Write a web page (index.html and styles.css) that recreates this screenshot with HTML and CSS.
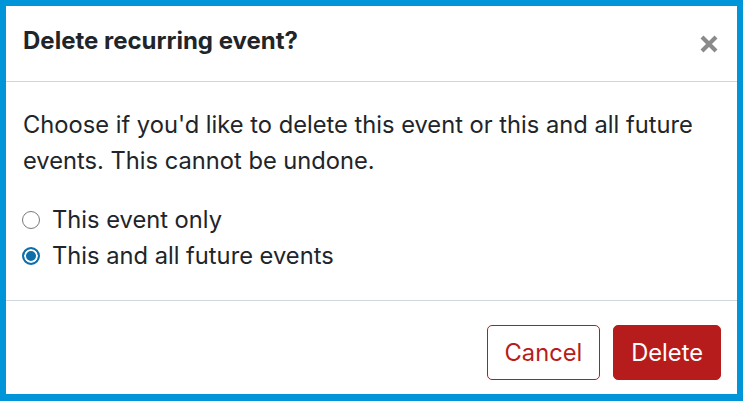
FILE: index.html
```html
<!DOCTYPE html>
<html lang="en">
<head>
<meta charset="utf-8">
<title>Delete recurring event</title>
<link rel="stylesheet" href="styles.css">
</head>
<body>
<div class="modal" role="dialog" aria-labelledby="modal-title">
  <header class="modal-header">
    <h1 class="modal-title" id="modal-title">Delete recurring event?</h1>
    <button class="close-btn" type="button" aria-label="Close">
      <svg viewBox="0 0 20 20" width="20" height="20" aria-hidden="true">
        <path d="M3 3 L17 17 M17 3 L3 17" stroke="#8a8a8a" stroke-width="4.2" stroke-linecap="butt" fill="none"/>
      </svg>
    </button>
  </header>
  <div class="modal-body">
    <p class="intro">Choose if you'd like to delete this event or this and all future events. This cannot be undone.</p>
    <div class="options">
      <label class="option"><span class="radio"></span>This event only</label>
      <label class="option"><span class="radio checked"></span>This and all future events</label>
    </div>
  </div>
  <footer class="modal-footer">
    <button class="btn btn-outline" type="button">Cancel</button>
    <button class="btn btn-danger" type="button">Delete</button>
  </footer>
</div>
</body>
</html>
```
FILE: styles.css
```css
html, body {
  margin: 0;
  padding: 0;
  height: 100%;
}
body {
  background: #0095d9;
  padding: 6px 6px 7px 6px;
  box-sizing: border-box;
  font-family: Inter, "Noto Sans", "Liberation Sans", sans-serif;
  color: #212529;
}
.modal {
  background: #fff;
  height: 100%;
  display: flex;
  flex-direction: column;
}
.modal-header {
  display: flex;
  align-items: center;
  justify-content: space-between;
  height: 76px;
  box-sizing: border-box;
  padding: 0 18px 6px 17px;
  border-bottom: 1px solid #ced7df;
}
.modal-title {
  margin: 0;
  font-size: 24px;
  font-weight: 700;
  color: #212529;
}
.close-btn {
  background: none;
  border: 0;
  padding: 0;
  display: flex;
  margin-top: 6px;
}
.modal-body {
  flex: 1;
  padding: 25px 17px 0 17px;
  border-bottom: 1px solid #ced7df;
}
.intro {
  margin: 0 0 23px;
  font-size: 23.7px;
  line-height: 36px;
}
.options {
  display: flex;
  flex-direction: column;
}
.option {
  display: flex;
  align-items: center;
  font-size: 23.7px;
  line-height: 36px;
  gap: 12px;
}
.radio {
  width: 18px;
  height: 18px;
  border: 1px solid #7a7a7a;
  border-radius: 50%;
  box-sizing: border-box;
  margin-left: -1px;
}
.radio.checked {
  border: 2px solid #0d6eaa;
  background: #0d6eaa;
  box-shadow: inset 0 0 0 2px #fff;
}
.modal-footer {
  height: 93px;
  box-sizing: border-box;
  display: flex;
  align-items: flex-start;
  justify-content: flex-end;
  gap: 13px;
  padding: 24px 16px 0;
}
.btn {
  font-family: inherit;
  font-size: 23.7px;
  height: 55px;
  padding: 0 17px;
  border-radius: 5px;
  cursor: pointer;
}
.btn-outline {
  background: #fff;
  color: #b71c1c;
  border: 1px solid #b71c1c;
}
.btn-danger {
  background: #b71c1c;
  color: #fff;
  border: 1px solid #b71c1c;
}
```
